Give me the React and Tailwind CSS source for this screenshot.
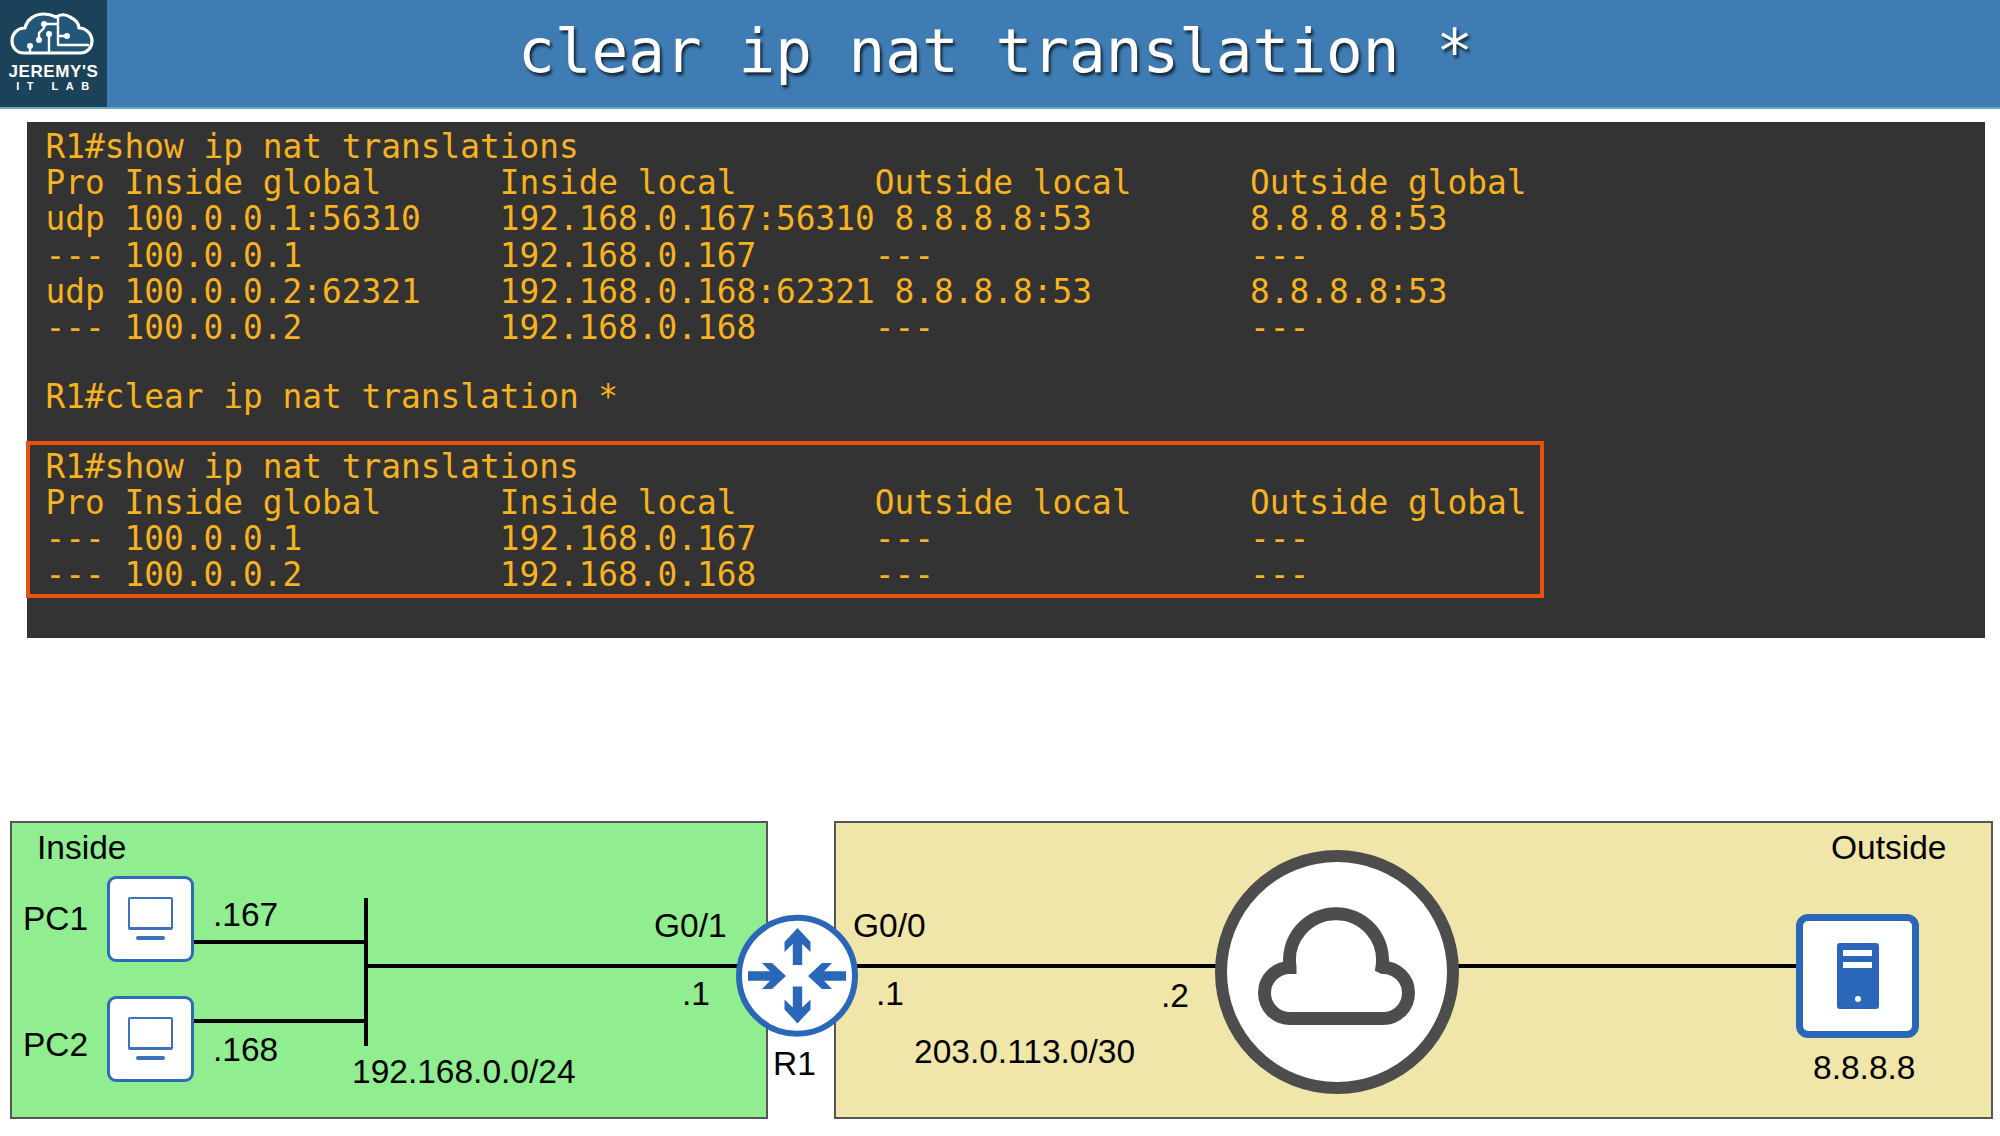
import React from 'react';

const firstTable = [
  'R1#show ip nat translations',
  'Pro Inside global      Inside local       Outside local      Outside global',
  'udp 100.0.0.1:56310    192.168.0.167:56310 8.8.8.8:53        8.8.8.8:53',
  '--- 100.0.0.1          192.168.0.167      ---                ---',
  'udp 100.0.0.2:62321    192.168.0.168:62321 8.8.8.8:53        8.8.8.8:53',
  '--- 100.0.0.2          192.168.0.168      ---                ---',
];

const secondTable = [
  'R1#show ip nat translations',
  'Pro Inside global      Inside local       Outside local      Outside global',
  '--- 100.0.0.1          192.168.0.167      ---                ---',
  '--- 100.0.0.2          192.168.0.168      ---                ---',
];

function Logo() {
  return (
    <div className="w-[107px] h-full bg-[#1b4259] flex flex-col items-center shrink-0">
      <svg width="107" height="59" viewBox="0 0 107 59" fill="none" stroke="#fff" strokeWidth="3.2" strokeLinecap="round" strokeLinejoin="round">
        <path d="M24 53C16 53 12 47 12 41C12 33 18 28 25 28C27 19 35 14 44 14C48 14 52 15 56 17C60 14 66 14 70 17C76 20 79 24 79 28C86 28 92 34 92 41C92 48 87 53 80 53Z" fill="#24567a" />
        <path d="M30 47V53M49 35V53M39 40V33L44 28V24M44 24H58M58 17V45H88M58 36H67" strokeWidth="2.4" />
        <circle cx="30" cy="46" r="3" fill="#fff" stroke="none" />
        <circle cx="39" cy="40" r="3" fill="#fff" stroke="none" />
        <circle cx="49" cy="34" r="3" fill="#fff" stroke="none" />
        <circle cx="44" cy="24" r="3" fill="#fff" stroke="none" />
        <circle cx="67" cy="36" r="3" fill="#fff" stroke="none" />
      </svg>
      <div className="mt-[4px] text-white font-bold text-[17px] leading-[17px] tracking-[0.6px] whitespace-nowrap">JEREMY'S</div>
      <div className="text-white font-bold text-[11px] leading-[12px] tracking-[7.5px] pl-[6px] whitespace-nowrap">IT LAB</div>
    </div>
  );
}

function TermLines({ lines }) {
  return lines.map((line, i) => (
    <div key={i} className="h-[36.2px]">{line}</div>
  ));
}

function PcNode({ className }) {
  return (
    <div className={`absolute left-[107px] w-[87px] h-[86px] bg-white border-[3.5px] border-[#2f6bbd] rounded-[9px] flex flex-col items-center ${className}`}>
      <div className="mt-[18px] w-[45px] h-[33px] border-2 border-b-[3px] border-[#3b72b8] rounded-[2px]" />
      <div className="mt-[6px] w-[29px] h-[3.5px] rounded-full bg-[#3b72b8]" />
    </div>
  );
}

function Router() {
  return (
    <svg className="absolute left-[736px] top-[93px]" width="123" height="124" viewBox="0 0 123 124">
      <circle cx="61" cy="61.7" r="58" fill="#fff" stroke="#2a67b8" strokeWidth="6" />
      <g fill="#2a67b8">
        <path d="M61.5 14L74.5 28V38L66.2 30V51H56.8V30L48.5 38V28Z" />
        <path d="M61.5 109.4L74.5 95.4V85.4L66.2 93.4V72.4H56.8V93.4L48.5 85.4V95.4Z" />
        <path d="M50 62L36 75H26L34 66.7H12V57.3H34L26 49H36Z" />
        <path d="M72 62L86 75H96L88 66.7H110V57.3H88L96 49H86Z" />
      </g>
    </svg>
  );
}

function CloudNode() {
  return (
    <div className="absolute left-[1215px] top-[29px] w-[244px] h-[244px] rounded-full bg-white border-[12px] border-[#4d4d4d]">
      <svg className="absolute left-[30px] top-[45px]" width="160" height="118" viewBox="0 0 160 118" fill="none" stroke="#4d4d4d" strokeWidth="13">
        <path d="M33 111.5H126A25.5 25.5 0 0 0 126 60.5L125 60A46.5 46.5 0 1 0 33 60L33 60.5A25.5 25.5 0 0 0 33 111.5Z" />
      </svg>
    </div>
  );
}

function ServerNode() {
  return (
    <div className="absolute left-[1796px] top-[93px] w-[123px] h-[124px] bg-white border-[7px] border-[#2a67b8] rounded-[12px] flex items-center justify-center">
      <div className="w-[42px] h-[66px] bg-[#2a67b8] rounded-[3px] flex flex-col items-center pt-[7px]">
        <div className="w-[29px] h-[6px] bg-white" />
        <div className="mt-[6px] w-[29px] h-[6px] bg-white" />
        <div className="mt-[28px] w-[6px] h-[6px] rounded-full bg-white" />
      </div>
    </div>
  );
}

function Label({ className, children }) {
  return (
    <span className={`absolute text-[33.5px] leading-none text-black whitespace-nowrap ${className}`}>{children}</span>
  );
}

export default function App() {
  return (
    <div className="w-[2000px] h-[1136px] bg-white overflow-hidden flex flex-col font-['Liberation_Sans',sans-serif]">
      <header className="h-[109px] shrink-0 flex bg-[#3f7cb3] border-b-2 border-[#6aa9c2]">
        <Logo />
        <h1 className="flex-1 pr-[116px] text-center text-white text-[61px] leading-[102px] font-normal whitespace-pre font-['DejaVu_Sans_Mono',monospace] [text-shadow:2px_3px_3px_rgba(0,0,0,0.7)]">
          clear ip nat translation *
        </h1>
      </header>

      <section className="mt-[13px] ml-[27px] w-[1958px] h-[516px] shrink-0 bg-[#333333] pt-[7px] text-[32.8px] leading-[36.2px] text-[#f7b21f] whitespace-pre font-['DejaVu_Sans_Mono',monospace]">
        <div className="pl-[18.5px]">
          <TermLines lines={firstTable} />
        </div>
        <div className="pl-[18.5px] mt-[33px]">R1#clear ip nat translation *</div>
        <div className="mt-[26px] -ml-[1px] w-[1518px] h-[157px] border-4 border-[#e8520f] pl-[15.5px] pt-[3.5px]">
          <TermLines lines={secondTable} />
        </div>
      </section>

      <section className="relative mt-[183px] h-[298px] shrink-0 flex gap-[66px] pl-[10px]">
        <div className="w-[758px] h-full bg-[#90ee90] border-2 border-[#555555]" />
        <div className="w-[1159px] h-full bg-[#f0e6aa] border-2 border-[#555555]" />

        {/* links between the nodes */}
        <svg className="absolute left-0 top-0" width="2000" height="298" viewBox="0 0 2000 298" stroke="#000" strokeWidth="4">
          <path d="M194 121H366M194 200H366M366 77V225M366 145H1796" fill="none" />
        </svg>

        <PcNode className="top-[55px]" />
        <PcNode className="top-[175px]" />
        <Router />
        <CloudNode />
        <ServerNode />

        <Label className="left-[37px] top-[10px]">Inside</Label>
        <Label className="left-[23px] top-[81px]">PC1</Label>
        <Label className="left-[213px] top-[77px]">.167</Label>
        <Label className="left-[23px] top-[207px]">PC2</Label>
        <Label className="left-[213px] top-[212px]">.168</Label>
        <Label className="left-[352px] top-[234px]">192.168.0.0/24</Label>
        <Label className="left-[654px] top-[88px]">G0/1</Label>
        <Label className="left-[682px] top-[156px]">.1</Label>
        <Label className="left-[773px] top-[226px]">R1</Label>
        <Label className="left-[853px] top-[88px]">G0/0</Label>
        <Label className="left-[876px] top-[156px]">.1</Label>
        <Label className="left-[1161px] top-[158px]">.2</Label>
        <Label className="left-[914px] top-[214px]">203.0.113.0/30</Label>
        <Label className="left-[1831px] top-[10px]">Outside</Label>
        <Label className="left-[1813px] top-[230px]">8.8.8.8</Label>
      </section>
    </div>
  );
}
